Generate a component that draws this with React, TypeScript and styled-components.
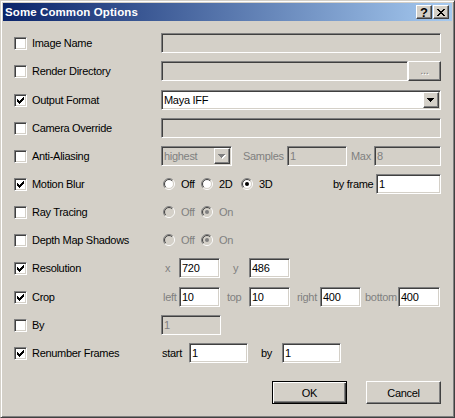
import React from "react";
import styled, { createGlobalStyle, css } from "styled-components";

const Global = createGlobalStyle`
  html, body { margin: 0; padding: 0; background: #d4d0c8; }
  body { font-family: "Liberation Sans", Arial, sans-serif; font-size: 11px; letter-spacing: -0.3px; color: #000; }
`;

const sunken = css`
  box-sizing: border-box;
  border: 1px solid;
  border-color: #808080 #ffffff #ffffff #808080;
  box-shadow: inset 1px 1px #404040, inset -1px -1px #d4d0c8;
`;

const raised = css`
  box-sizing: border-box;
  border: 1px solid;
  border-color: #ffffff #404040 #404040 #ffffff;
  box-shadow: inset -1px -1px #808080;
  background: #d4d0c8;
`;

const Window = styled.div`
  width: 455px;
  height: 418px;
  box-sizing: border-box;
  background: #d4d0c8;
  border: 1px solid;
  border-color: #d4d0c8 #404040 #404040 #d4d0c8;
  box-shadow: inset 1px 1px #ffffff, inset -1px -1px #808080;
  padding: 2px;
  display: flex;
  flex-direction: column;
`;

const TitleBar = styled.div`
  height: 18px;
  flex: 0 0 auto;
  display: flex;
  align-items: center;
  padding: 0 2px 0 2px;
  background: linear-gradient(to right, #0a246a, #a6caf0);
  color: #ffffff;
`;

const TitleText = styled.span`
  flex: 1;
  font-weight: bold;
  font-size: 11.5px;
  letter-spacing: 0.1px;
`;

const TitleButtons = styled.div`
  display: flex;
  gap: 1px;
  margin-right: 1px;
`;

const CaptionBtn = styled.span`
  ${raised};
  width: 16px;
  height: 14px;
  display: flex;
  align-items: center;
  justify-content: center;
  font-weight: bold;
  font-size: 13px;
  letter-spacing: 0;
  color: #000;
  line-height: 1;
`;

const Body = styled.div`
  flex: 1;
  display: flex;
  flex-direction: column;
  padding: 8px 11px 0 11px;
`;

const Row = styled.div<{ $mt?: number }>`
  display: grid;
  grid-template-columns: 147px 1fr;
  align-items: center;
  height: 28px;
  margin-top: ${(p) => p.$mt ?? 0}px;
`;

const LabelCell = styled.label`
  display: flex;
  align-items: center;
  gap: 5px;
  white-space: nowrap;
`;

const Box = styled.span`
  ${sunken};
  width: 13px;
  height: 13px;
  background: #ffffff;
  display: flex;
  align-items: center;
  justify-content: center;
  flex: 0 0 auto;
`;

const Controls = styled.div`
  display: flex;
  align-items: center;
  min-width: 0;
`;

const Field = styled.div<{ $w?: number; $off?: boolean; $grow?: boolean }>`
  ${sunken};
  flex: ${(p) => (p.$grow ? "1 1 auto" : "0 0 auto")};
  width: ${(p) => (p.$w ? `${p.$w}px` : "auto")};
  height: 20px;
  background: ${(p) => (p.$off ? "#d4d0c8" : "#ffffff")};
  color: ${(p) => (p.$off ? "#808080" : "#000000")};
  display: flex;
  align-items: center;
  padding: 0 1px 0 2px;
  white-space: nowrap;
  overflow: hidden;
`;

const ComboText = styled.span`
  flex: 1;
`;

const ArrowBtn = styled.span`
  ${raised};
  width: 16px;
  height: 16px;
  flex: 0 0 auto;
  display: flex;
  align-items: center;
  justify-content: center;
`;

const Cap = styled.span<{ $w: number; $pl: number; $muted?: boolean }>`
  flex: 0 0 auto;
  box-sizing: border-box;
  width: ${(p) => p.$w}px;
  padding-left: ${(p) => p.$pl}px;
  color: ${(p) => (p.$muted ? "#808080" : "#000000")};
  white-space: nowrap;
`;

const Spacer = styled.span`
  flex: 1;
`;

const SmallBtn = styled.span`
  ${raised};
  width: 33px;
  height: 20px;
  flex: 0 0 auto;
  display: flex;
  align-items: center;
  justify-content: center;
  color: #808080;
  text-shadow: 1px 1px #ffffff;
  padding-bottom: 2px;
`;

const RadioItem = styled.span<{ $w?: number; $off?: boolean }>`
  flex: 0 0 auto;
  width: ${(p) => (p.$w ? `${p.$w}px` : "auto")};
  display: flex;
  align-items: center;
  gap: 6px;
  color: ${(p) => (p.$off ? "#808080" : "#000000")};
`;

const RadioGroup = styled.div`
  display: flex;
  align-items: center;
  padding-left: 2px;
`;

const Footer = styled.div`
  display: flex;
  justify-content: flex-end;
  gap: 19px;
  margin-top: 14px;
`;

const PushBtn = styled.span<{ $default?: boolean }>`
  box-sizing: border-box;
  width: 75px;
  height: 23px;
  display: flex;
  align-items: center;
  justify-content: center;
  background: #d4d0c8;
  border: 1px solid;
  ${(p) =>
    p.$default
      ? css`
          border-color: #000000;
          box-shadow: inset 1px 1px #ffffff, inset -1px -1px #404040, inset -2px -2px #808080;
        `
      : css`
          border-color: #ffffff #404040 #404040 #ffffff;
          box-shadow: inset -1px -1px #808080;
        `}
`;

const Check = () => (
  <svg width="7" height="7" viewBox="0 0 7 7" shapeRendering="crispEdges">
    <path
      d="M6 0h1v3h-1v1h-1v1h-1v1h-1v1h-1v-1h-1v-1h-1v-3h1v1h1v1h1v-1h1v-1h1z"
      fill="#000"
    />
  </svg>
);

const CheckBox = ({ on }: { on?: boolean }) => <Box>{on ? <Check /> : null}</Box>;

const arc = (r: number, first: boolean) => {
  const c = 6;
  const d = r * Math.SQRT1_2;
  const bl = `${c - d} ${c + d}`;
  const tr = `${c + d} ${c - d}`;
  return first ? `M${bl} A${r} ${r} 0 0 1 ${tr}` : `M${tr} A${r} ${r} 0 0 1 ${bl}`;
};

const RadioMark = ({ on, off }: { on?: boolean; off?: boolean }) => (
  <svg width="12" height="12" viewBox="0 0 12 12">
    <circle cx="6" cy="6" r="4.5" fill={off ? "#d4d0c8" : "#ffffff"} />
    <path d={arc(5.5, true)} stroke="#808080" fill="none" />
    <path d={arc(4.5, true)} stroke="#404040" fill="none" />
    <path d={arc(5.5, false)} stroke="#ffffff" fill="none" />
    <path d={arc(4.5, false)} stroke="#d4d0c8" fill="none" />
    {on ? <circle cx="6" cy="6" r="2" fill={off ? "#808080" : "#000000"} /> : null}
  </svg>
);

const Radio = ({ label, on, off, w }: { label: string; on?: boolean; off?: boolean; w?: number }) => (
  <RadioItem $w={w} $off={off}>
    <RadioMark on={on} off={off} />
    {label}
  </RadioItem>
);

const DownArrow = ({ off }: { off?: boolean }) => (
  <svg width="8" height="5" viewBox="0 0 8 5" shapeRendering="crispEdges">
    {off ? <path d="M1 1h7l-3.5 4z" fill="#ffffff" /> : null}
    <path d="M0 0h7l-3.5 4z" fill={off ? "#808080" : "#000000"} />
  </svg>
);

const CloseGlyph = () => (
  <svg width="8" height="7" viewBox="0 0 8 7" shapeRendering="crispEdges">
    <path
      d="M0 0h2v1h1v1h2v-1h1v-1h2v1h-1v1h-1v1h-1v1h1v1h1v1h1v1h-2v-1h-1v-1h-2v1h-1v1h-2v-1h1v-1h1v-1h1v-1h-1v-1h-1v-1h-1z"
      fill="#000"
    />
  </svg>
);

type OptionRowProps = { label: string; on?: boolean; mt?: number; children?: React.ReactNode };
const OptionRow = ({ label, on, mt, children }: OptionRowProps) => (
  <Row $mt={mt}>
    <LabelCell>
      <CheckBox on={on} />
      {label}
    </LabelCell>
    <Controls>{children}</Controls>
  </Row>
);

export default function App() {
  return (
    <>
      <Global />
      <Window>
        <TitleBar>
          <TitleText>Some Common Options</TitleText>
          <TitleButtons>
            <CaptionBtn>?</CaptionBtn>
            <CaptionBtn>
              <CloseGlyph />
            </CaptionBtn>
          </TitleButtons>
        </TitleBar>
        <Body>
          <OptionRow label="Image Name">
            <Field $grow $off />
          </OptionRow>
          <OptionRow label="Render Directory">
            <Field $grow $off />
            <SmallBtn>...</SmallBtn>
          </OptionRow>
          <OptionRow label="Output Format" on mt={1}>
            <Field $grow>
              <ComboText>Maya IFF</ComboText>
              <ArrowBtn>
                <DownArrow />
              </ArrowBtn>
            </Field>
          </OptionRow>
          <OptionRow label="Camera Override">
            <Field $grow $off />
          </OptionRow>
          <OptionRow label="Anti-Aliasing">
            <Field $w={71} $off>
              <ComboText>highest</ComboText>
              <ArrowBtn>
                <DownArrow off />
              </ArrowBtn>
            </Field>
            <Cap $w={55} $pl={11} $muted>
              Samples
            </Cap>
            <Field $w={60} $off>
              1
            </Field>
            <Cap $w={27} $pl={4} $muted>
              Max
            </Cap>
            <Field $grow $off>
              8
            </Field>
          </OptionRow>
          <OptionRow label="Motion Blur" on>
            <RadioGroup>
              <Radio label="Off" w={38} />
              <Radio label="2D" w={40} />
              <Radio label="3D" on />
            </RadioGroup>
            <Spacer />
            <Cap $w={43} $pl={0}>
              by frame
            </Cap>
            <Field $w={65}>1</Field>
          </OptionRow>
          <OptionRow label="Ray Tracing">
            <RadioGroup>
              <Radio label="Off" w={38} off />
              <Radio label="On" on off />
            </RadioGroup>
          </OptionRow>
          <OptionRow label="Depth Map Shadows">
            <RadioGroup>
              <Radio label="Off" w={38} off />
              <Radio label="On" on off />
            </RadioGroup>
          </OptionRow>
          <OptionRow label="Resolution" on>
            <Cap $w={18} $pl={4} $muted>
              x
            </Cap>
            <Field $w={41}>720</Field>
            <Cap $w={29} $pl={13} $muted>
              y
            </Cap>
            <Field $w={41}>486</Field>
          </OptionRow>
          <OptionRow label="Crop" on mt={1}>
            <Cap $w={18} $pl={2} $muted>
              left
            </Cap>
            <Field $w={41}>10</Field>
            <Cap $w={29} $pl={7} $muted>
              top
            </Cap>
            <Field $w={41}>10</Field>
            <Cap $w={30} $pl={7} $muted>
              right
            </Cap>
            <Field $w={41}>400</Field>
            <Cap $w={37} $pl={4} $muted>
              bottom
            </Cap>
            <Field $w={42}>400</Field>
          </OptionRow>
          <OptionRow label="By">
            <Field $w={60} $off>
              1
            </Field>
          </OptionRow>
          <OptionRow label="Renumber Frames" on>
            <Cap $w={28} $pl={1}>
              start
            </Cap>
            <Field $w={59}>1</Field>
            <Cap $w={34} $pl={13}>
              by
            </Cap>
            <Field $w={59}>1</Field>
          </OptionRow>
          <Footer>
            <PushBtn $default>OK</PushBtn>
            <PushBtn>Cancel</PushBtn>
          </Footer>
        </Body>
      </Window>
    </>
  );
}
